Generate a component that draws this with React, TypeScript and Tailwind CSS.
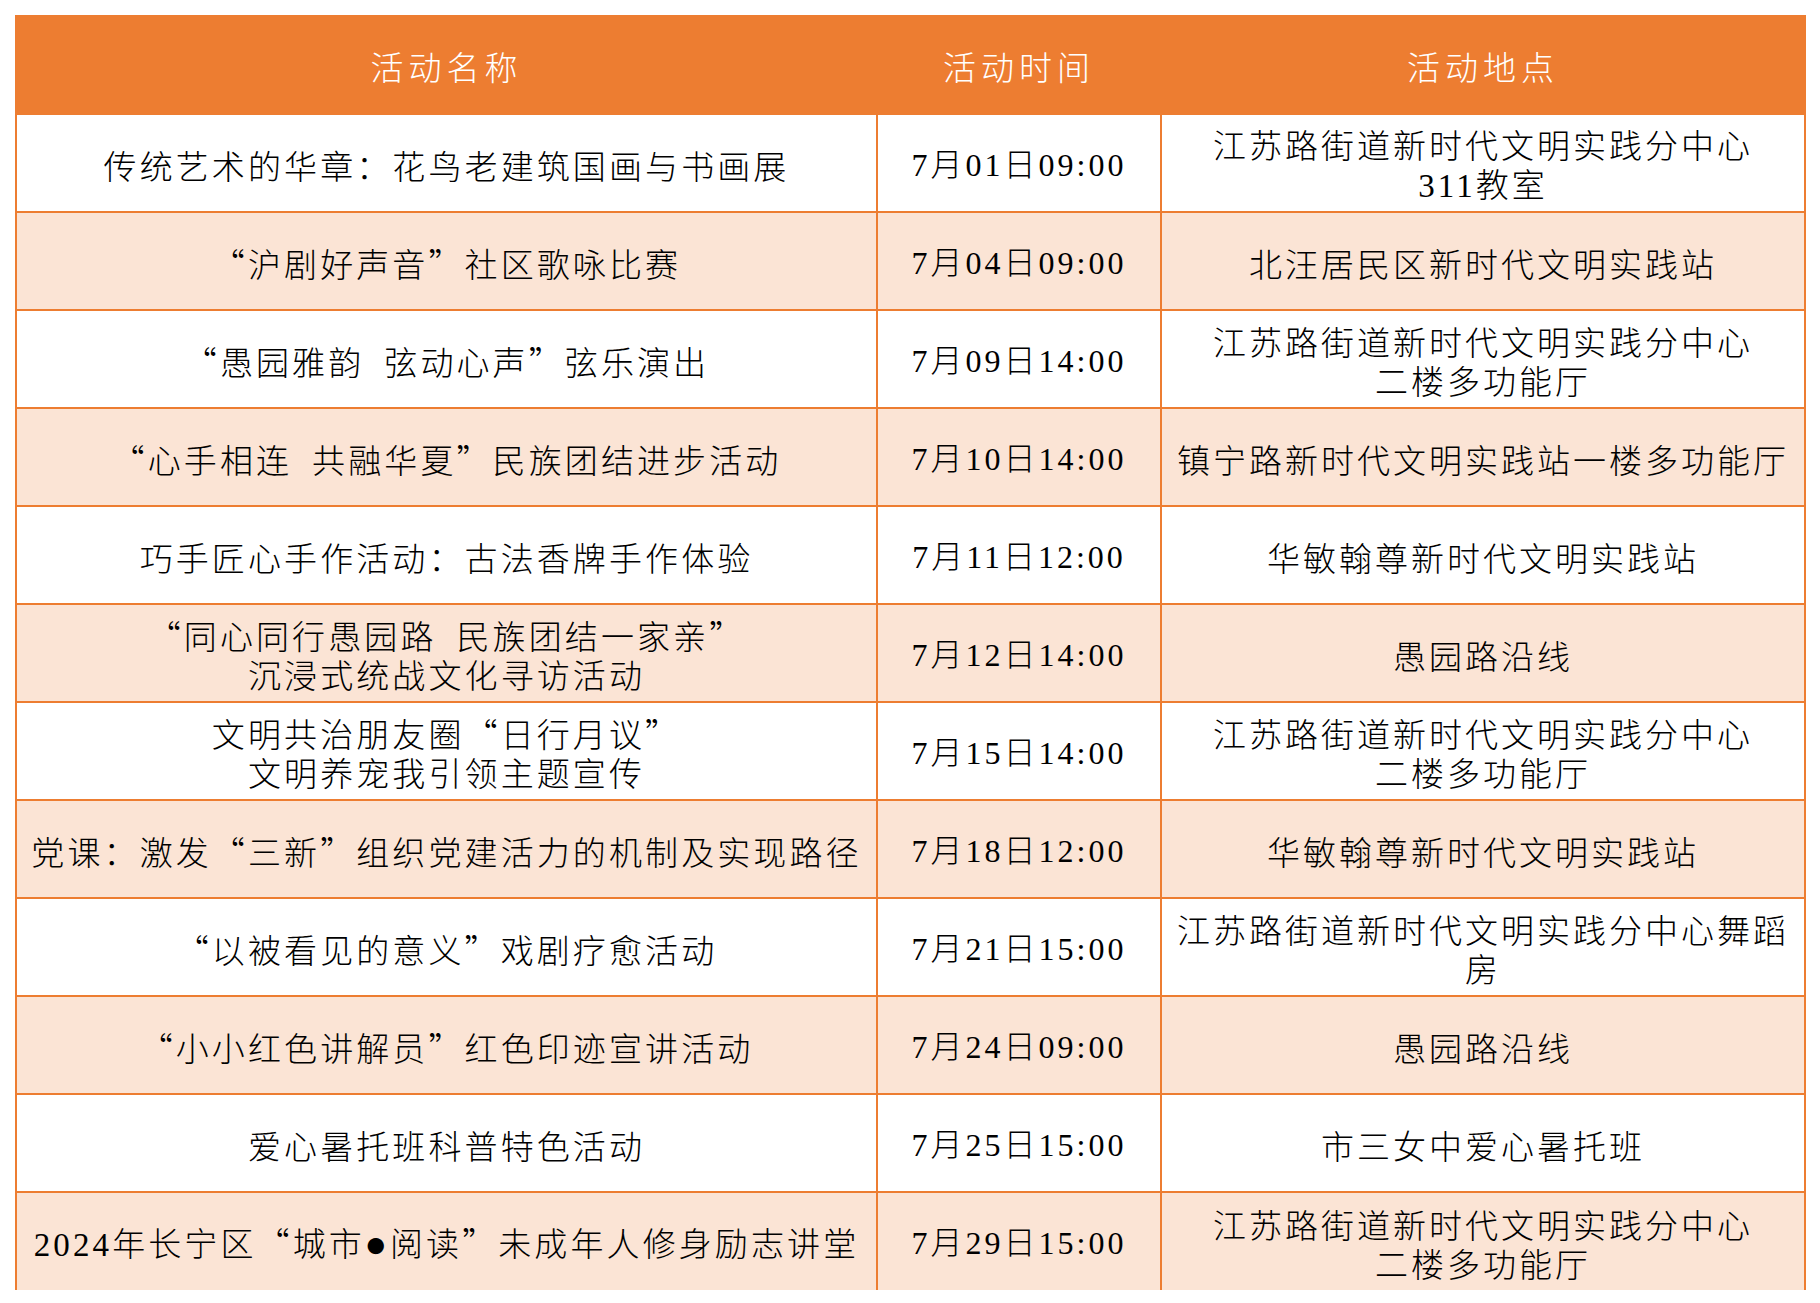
import React from "react";

type Row = {
  name: string[];
  time: string;
  place: string[];
};

const rows: Row[] = [
  { name: ["传统艺术的华章：花鸟老建筑国画与书画展"], time: "7月01日09:00", place: ["江苏路街道新时代文明实践分中心", "311教室"] },
  { name: ["“沪剧好声音”社区歌咏比赛"], time: "7月04日09:00", place: ["北汪居民区新时代文明实践站"] },
  { name: ["“愚园雅韵 弦动心声”弦乐演出"], time: "7月09日14:00", place: ["江苏路街道新时代文明实践分中心", "二楼多功能厅"] },
  { name: ["“心手相连 共融华夏”民族团结进步活动"], time: "7月10日14:00", place: ["镇宁路新时代文明实践站一楼多功能厅"] },
  { name: ["巧手匠心手作活动：古法香牌手作体验"], time: "7月11日12:00", place: ["华敏翰尊新时代文明实践站"] },
  { name: ["“同心同行愚园路 民族团结一家亲”", "沉浸式统战文化寻访活动"], time: "7月12日14:00", place: ["愚园路沿线"] },
  { name: ["文明共治朋友圈“日行月议”", "文明养宠我引领主题宣传"], time: "7月15日14:00", place: ["江苏路街道新时代文明实践分中心", "二楼多功能厅"] },
  { name: ["党课：激发“三新”组织党建活力的机制及实现路径"], time: "7月18日12:00", place: ["华敏翰尊新时代文明实践站"] },
  { name: ["“以被看见的意义”戏剧疗愈活动"], time: "7月21日15:00", place: ["江苏路街道新时代文明实践分中心舞蹈", "房"] },
  { name: ["“小小红色讲解员”红色印迹宣讲活动"], time: "7月24日09:00", place: ["愚园路沿线"] },
  { name: ["爱心暑托班科普特色活动"], time: "7月25日15:00", place: ["市三女中爱心暑托班"] },
  { name: ["2024年长宁区“城市●阅读”未成年人修身励志讲堂"], time: "7月29日15:00", place: ["江苏路街道新时代文明实践分中心", "二楼多功能厅"] },
];

// digits are set in a serif face, like the source sheet; the bullet is drawn smaller
const mix = (text: string) =>
  text.split(/([0-9:]+|●| )/).map((part, i) => {
    if (part === "●")
      return (
        <span key={i} className="mx-[2px] align-[3px] text-[18px]">
          ●
        </span>
      );
    if (part === " ") return <span key={i} className="inline-block w-[20px]"> </span>;
    if (/^[0-9:]+$/.test(part))
      return (
        <span key={i} className="font-['Liberation_Serif',serif]">
          {part}
        </span>
      );
    return <span key={i}>{part}</span>;
  });

const Lines = ({ lines }: { lines: string[] }) => (
  <>
    {lines.map((l, i) => (
      <div key={i}>{mix(l)}</div>
    ))}
  </>
);

export default function App() {
  return (
    <div className="min-h-[1303px] w-[1820px] bg-white pt-[15px] pl-[15px] font-['Noto_Sans_CJK_SC',sans-serif] text-black">
      <table className="w-[1789px] table-fixed border-collapse">
        <colgroup>
          <col className="w-[861px]" />
          <col className="w-[284px]" />
          <col className="w-[644px]" />
        </colgroup>
        <thead>
          <tr className="h-[98px] bg-[#ed7d31] text-white">
            {["活动名称", "活动时间", "活动地点"].map((h) => (
              <th
                key={h}
                className="border-2 border-[#ed7d31] pt-1 text-center text-[33px] font-light tracking-[5px]"
              >
                {h}
              </th>
            ))}
          </tr>
        </thead>
        <tbody>
          {rows.map((r, i) => {
            const last = i === rows.length - 1;
            return (
              <tr key={i} className={`h-[98px] ${i % 2 === 1 ? "bg-[#fbe4d5]" : "bg-white"}`}>
                <td
                  className={`border-2 border-[#ed7d31] px-1 pt-1 text-center text-[33px] font-light leading-[39px] tracking-[3.1px] whitespace-nowrap ${last ? "border-b-0" : ""}`}
                >
                  <Lines lines={r.name} />
                </td>
                <td
                  className={`border-2 border-[#ed7d31] pt-1 text-center font-['Liberation_Serif','Noto_Sans_CJK_SC',serif] text-[32px] font-light leading-[39px] tracking-[3px] ${last ? "border-b-0" : ""}`}
                >
                  {r.time}
                </td>
                <td
                  className={`border-2 border-[#ed7d31] px-0 pt-1 text-center text-[33px] font-light leading-[39px] tracking-[3px] whitespace-nowrap ${last ? "border-b-0" : ""}`}
                >
                  <Lines lines={r.place} />
                </td>
              </tr>
            );
          })}
        </tbody>
      </table>
    </div>
  );
}
